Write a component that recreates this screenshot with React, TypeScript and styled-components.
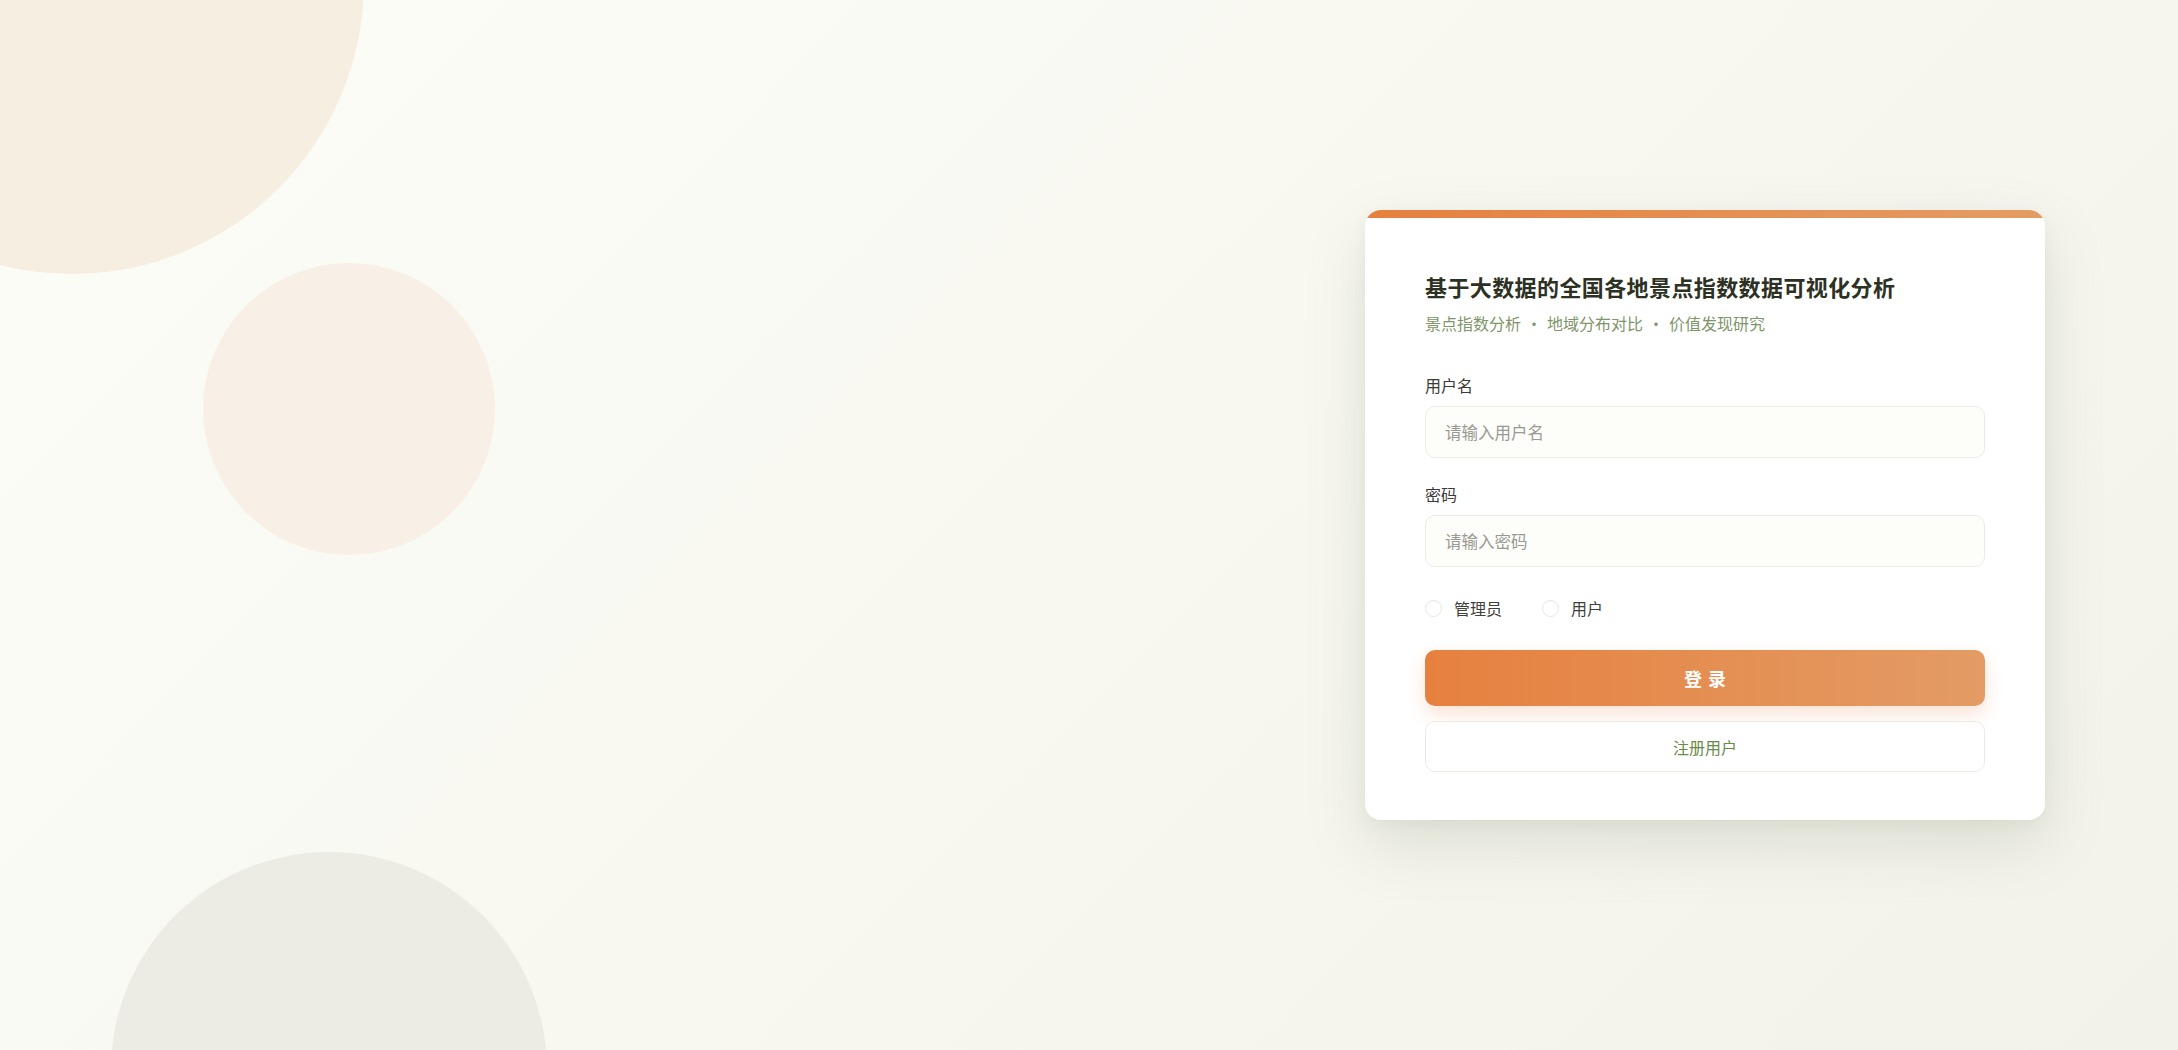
import React, { useState } from "react";
import styled, { createGlobalStyle } from "styled-components";

const GlobalStyle = createGlobalStyle`
  * { box-sizing: border-box; }
  html, body { margin: 0; padding: 0; }
  body {
    font-family: "Noto Sans CJK SC", "Noto Sans", "Liberation Sans", sans-serif;
    background: #f7f7f0;
  }
`;

const Page = styled.div`
  position: relative;
  width: 100%;
  height: 100vh;
  min-height: 1050px;
  overflow: hidden;
  display: flex;
  align-items: center;
  justify-content: flex-end;
  padding: 0 133px 20px 0;
  background: linear-gradient(135deg, #fdfdf8 0%, #f8f8f1 50%, #f2f2ea 100%);
`;

const Bubble = styled.div<{ $size: number; $x: number; $y: number; $color: string }>`
  position: absolute;
  left: ${(p) => p.$x}px;
  top: ${(p) => p.$y}px;
  width: ${(p) => p.$size}px;
  height: ${(p) => p.$size}px;
  border-radius: 50%;
  background: ${(p) => p.$color};
  pointer-events: none;
`;

const Card = styled.div`
  position: relative;
  z-index: 1;
  width: 680px;
  background: #ffffff;
  border-radius: 16px;
  overflow: hidden;
  padding: 60px 60px 48px;
  box-shadow: 0 24px 60px rgba(110, 115, 90, 0.18), 0 4px 14px rgba(110, 115, 90, 0.06);
`;

const AccentBar = styled.div`
  position: absolute;
  left: 0;
  right: 0;
  top: 0;
  height: 8px;
  background: linear-gradient(90deg, #e6803f 0%, #e39c65 100%);
`;

const Title = styled.h1`
  margin: 0;
  font-size: 22px;
  line-height: 32px;
  font-weight: 700;
  letter-spacing: 0.4px;
  color: #2c3124;
`;

const Subtitle = styled.div`
  margin-top: 10px;
  font-size: 16px;
  line-height: 22px;
  color: #80956a;
  display: flex;
  align-items: center;
`;

const Dot = styled.span`
  margin: 0 5px;
`;

const Form = styled.form`
  margin-top: 40px;
  display: flex;
  flex-direction: column;
`;

const Field = styled.div`
  display: flex;
  flex-direction: column;
  gap: 10px;
  margin-bottom: 25px;
`;

const Label = styled.label`
  font-size: 16px;
  line-height: 22px;
  font-weight: 400;
  color: #3a3a37;
`;

const Input = styled.input`
  height: 52px;
  width: 100%;
  border: 1px solid #ebebe5;
  border-radius: 10px;
  background: #fdfdfa;
  padding: 0 19px;
  font-family: inherit;
  font-size: 16.5px;
  color: #333;
  outline: none;
  &::placeholder { color: #9a9a94; }
`;

const RoleRow = styled.div`
  display: flex;
  align-items: center;
  gap: 40px;
  height: 32px;
`;

const RoleOption = styled.label`
  display: flex;
  align-items: center;
  gap: 12px;
  font-size: 16px;
  color: #3f3f3c;
  cursor: pointer;
`;

const RadioCircle = styled.span<{ $checked: boolean }>`
  width: 17px;
  height: 17px;
  border-radius: 50%;
  border: 1px solid #e6e6e0;
  background: #fff;
  display: inline-flex;
  align-items: center;
  justify-content: center;
  &::after {
    content: "";
    width: 7px;
    height: 7px;
    border-radius: 50%;
    background: ${(p) => (p.$checked ? "#e6803f" : "transparent")};
  }
`;

const HiddenRadio = styled.input`
  display: none;
`;

const PrimaryButton = styled.button`
  margin-top: 26px;
  height: 56px;
  width: 100%;
  border: none;
  border-radius: 10px;
  background: linear-gradient(90deg, #e6803f 0%, #e39c65 100%);
  color: #fff;
  font-family: inherit;
  font-size: 18px;
  font-weight: 700;
  letter-spacing: 6px;
  text-indent: 6px;
  box-shadow: 0 8px 18px rgba(230, 128, 63, 0.22);
  cursor: pointer;
`;

const SecondaryButton = styled.button`
  margin-top: 15px;
  height: 51px;
  width: 100%;
  border: 1px solid #ebebe5;
  border-radius: 10px;
  background: #fff;
  color: #6a8a4c;
  font-family: inherit;
  font-size: 16px;
  font-weight: 400;
  cursor: pointer;
`;

export default function App() {
  const [role, setRole] = useState<string>("");
  return (
    <>
      <GlobalStyle />
      <Page>
        <Bubble $size={584} $x={-220} $y={-310} $color="#f7eee2" />
        <Bubble $size={292} $x={203} $y={263} $color="#f8f0e6" />
        <Bubble $size={436} $x={111} $y={852} $color="#ecece4" />
        <Card>
          <AccentBar />
          <Title>基于大数据的全国各地景点指数数据可视化分析</Title>
          <Subtitle>
            <span>景点指数分析</span>
            <Dot>·</Dot>
            <span>地域分布对比</span>
            <Dot>·</Dot>
            <span>价值发现研究</span>
          </Subtitle>
          <Form onSubmit={(e) => e.preventDefault()}>
            <Field>
              <Label>用户名</Label>
              <Input placeholder="请输入用户名" />
            </Field>
            <Field>
              <Label>密码</Label>
              <Input type="password" placeholder="请输入密码" />
            </Field>
            <RoleRow>
              <RoleOption>
                <HiddenRadio type="radio" name="role" checked={role === "admin"} onChange={() => setRole("admin")} />
                <RadioCircle $checked={role === "admin"} />
                管理员
              </RoleOption>
              <RoleOption>
                <HiddenRadio type="radio" name="role" checked={role === "user"} onChange={() => setRole("user")} />
                <RadioCircle $checked={role === "user"} />
                用户
              </RoleOption>
            </RoleRow>
            <PrimaryButton type="submit">登录</PrimaryButton>
            <SecondaryButton type="button">注册用户</SecondaryButton>
          </Form>
        </Card>
      </Page>
    </>
  );
}
